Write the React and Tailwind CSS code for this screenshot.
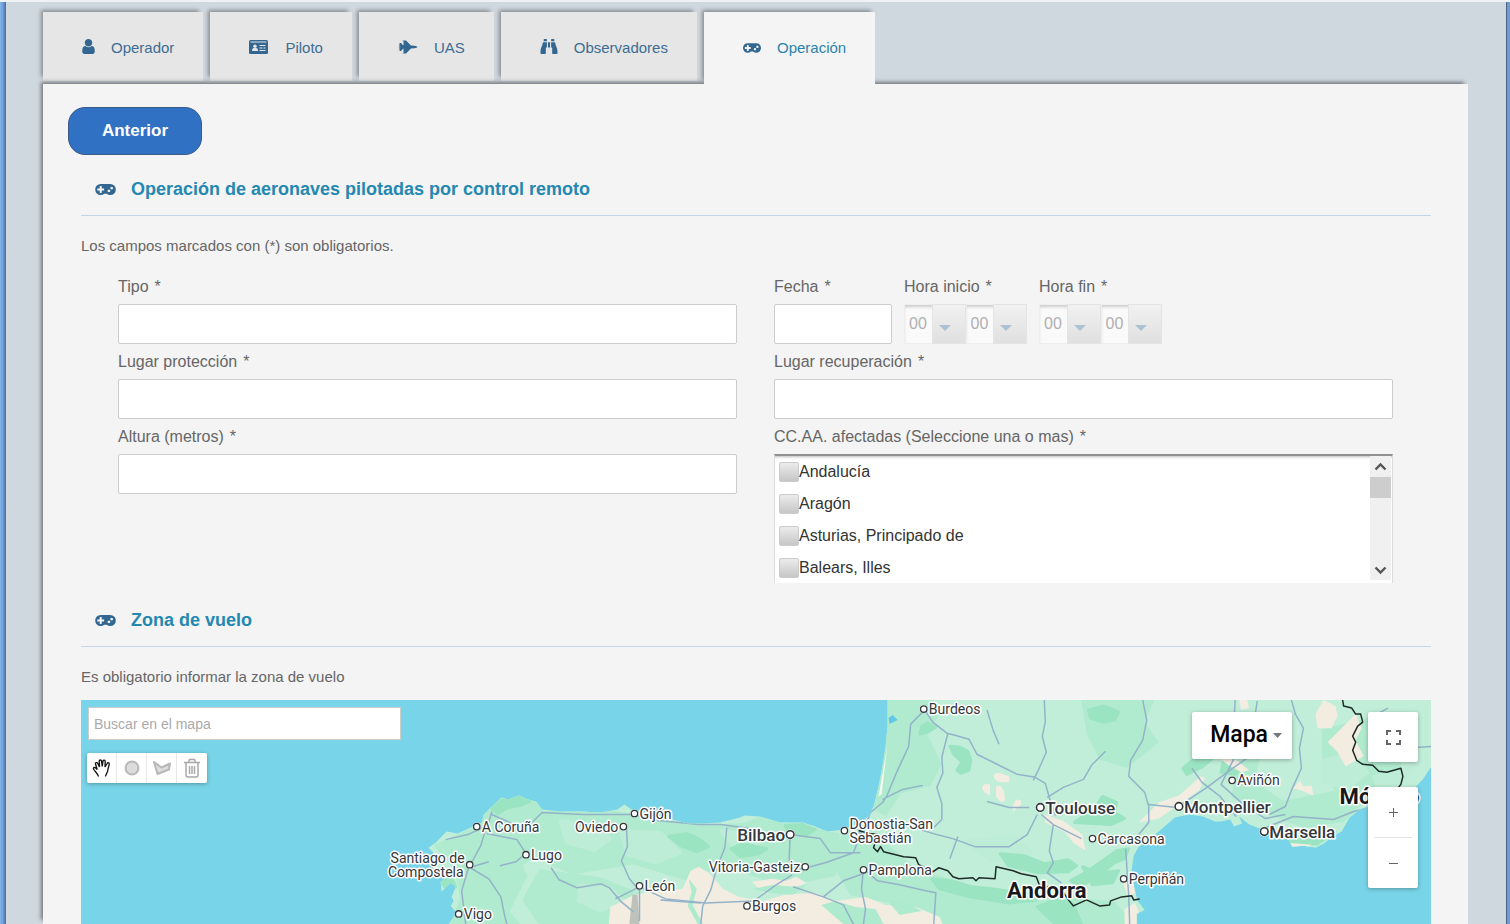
import { FaBinoculars } from "react-icons/fa";

const TABS = [
  { id: "operador", label: "Operador", icon: <UserIcon /> },
  { id: "piloto", label: "Piloto", icon: <IdCardIcon /> },
  { id: "uas", label: "UAS", icon: <JetIcon /> },
  { id: "observadores", label: "Observadores", icon: <FaBinoculars className="w-[18px] h-[17px]" /> },
  { id: "operacion", label: "Operación", icon: <GamepadIcon className="w-[18px] h-[10px]" />, active: true },
];

const REGIONS = ["Andalucía", "Aragón", "Asturias, Principado de", "Balears, Illes"];

export default function App() {
  return (
    <div className="flex min-h-screen border-t-2 border-[#eef1f5] bg-[#d0d8df] font-['Liberation_Sans',Arial,sans-serif] text-[#666]">
      <div className="w-[6px] shrink-0 bg-linear-to-r from-[#86b4e8] via-[#6b9edb] to-[#4a6b94]" />
      <main className="flex flex-1 flex-col pl-[37px] pr-[38px] pt-[10px]">
        <nav className="flex items-start gap-[7px] h-[72px]">
          {TABS.map(t => <Tab key={t.id} {...t} />)}
        </nav>

        <div className="flex flex-1 flex-col bg-[#f4f4f4] pt-[23px] shadow-[-3px_-3px_4px_-1px_rgba(0,0,0,0.45)]">
          <button className="ml-[25px] h-12 w-[134px] rounded-[17px] border border-[#3b5a85] bg-[#3171c4] text-[17px] font-bold text-white">
            Anterior
          </button>

          <section className="mt-2 pl-[38px] pr-[37px]">
            <Heading>Operación de aeronaves pilotadas por control remoto</Heading>
            <p className="mt-5 text-[15px] leading-5">Los campos marcados con (*) son obligatorios.</p>
            <OperationForm />
          </section>

          <section className="mt-[11px] flex flex-1 flex-col pl-[38px] pr-[37px]">
            <Heading>Zona de vuelo</Heading>
            <p className="mt-5 text-[15px] leading-5">Es obligatorio informar la zona de vuelo</p>
            <FlightMap />
          </section>
        </div>
      </main>
      <div className="w-1 shrink-0 border-l border-[#46648c] bg-[#6f9bcb]" />
    </div>
  );
}

function Tab({ label, icon, active }) {
  return (
    <button
      className={`flex items-center gap-4 pl-[39px] pr-[29px] text-[15px] shadow-[-3px_-3px_4px_-1px_rgba(0,0,0,0.35)]
        ${active ? "relative z-10 h-[72px] bg-[#f4f4f4] text-[#2b83ab]" : "h-[69px] bg-[#e6e6e6] text-[#3d6d93]"}`}
    >
      <span className="text-[#336791]">{icon}</span>
      <span className={active ? "" : "pt-[3px]"}>{label}</span>
    </button>
  );
}

function Heading({ children }) {
  return (
    <h2 className="flex h-[53px] items-center gap-[15px] border-b border-[#c3d4e4] pl-[14px] text-[18px] font-bold text-[#2488b0]">
      <GamepadIcon className="h-[11px] w-[21px] text-[#336791]" />
      {children}
    </h2>
  );
}

/* form */

function OperationForm() {
  return (
    <form className="mt-[13px] grid grid-cols-2 gap-x-[37px] pl-[37px] pr-[38px]">
      <Field id="tipo" label="Tipo" />
      <div className="flex gap-3">
        <div className="w-[118px]">
          <Field id="fecha" label="Fecha" />
        </div>
        <TimeField id="inicio" label="Hora inicio" />
        <TimeField id="fin" label="Hora fin" />
      </div>
      <Field id="proteccion" label="Lugar protección" />
      <Field id="recuperacion" label="Lugar recuperación" />
      <Field id="altura" label="Altura (metros)" />
      <div>
        <Label>CC.AA. afectadas (Seleccione una o mas)</Label>
        <RegionList />
      </div>
    </form>
  );
}

function Label({ htmlFor, children }) {
  return (
    <label htmlFor={htmlFor} className="flex h-[35px] items-center gap-[6px] whitespace-nowrap text-[16px]">
      <span>{children}</span>
      <span>*</span>
    </label>
  );
}

function Field({ id, label }) {
  return (
    <div>
      <Label htmlFor={id}>{label}</Label>
      <input id={id} type="text" className="block h-10 w-full rounded-[2px] border border-[#ccc] bg-white px-2 text-[16px]" />
    </div>
  );
}

function TimeField({ id, label }) {
  return (
    <div className="w-[123px]">
      <Label htmlFor={id}>{label}</Label>
      <div className="flex">
        <TimeSelect id={id} name="Hora" />
        <TimeSelect id={`${id}-min`} name="Minutos" />
      </div>
    </div>
  );
}

function TimeSelect({ id, name }) {
  return (
    <div className="relative flex-1">
      <select
        id={id}
        aria-label={name}
        disabled
        className="block h-10 w-full appearance-none border border-[#eee] bg-[#fafafa] pl-1 text-[16px] text-[#b0b0b0] opacity-100 shadow-[inset_0_3px_3px_-1px_#ccc]"
      >
        <option>00</option>
      </select>
      <span className="pointer-events-none absolute inset-y-0 right-0 flex w-[34px] items-center justify-start border border-[#e4e4e4] bg-linear-to-b from-[#f1f1f1] to-[#e0e0e0] pl-[6px] pt-[7px]">
        <svg className="h-[6px] w-3 text-[#abc3d0]" viewBox="0 0 12 6" fill="currentColor"><path d="M0 0h12L6 6z" /></svg>
      </span>
    </div>
  );
}

function RegionList() {
  return (
    <div className="flex h-[129px] border-x border-t-2 border-x-[#ddd] border-t-[#8f9290] bg-white shadow-[inset_0_3px_3px_-2px_#bbb]">
      <ul className="flex-1 pl-1 text-[16px] text-[#333]">
        {REGIONS.map(r => (
          <li key={r} className="h-8">
            <label className="flex h-8 items-center">
              <input
                type="checkbox"
                className="h-5 w-5 appearance-none rounded-[2px] border border-[#ccc] bg-linear-to-b from-[#ececec] to-[#c6c6c6]"
              />
              {r}
            </label>
          </li>
        ))}
      </ul>
      <div className="mb-[3px] mr-px flex w-[21px] flex-col bg-[#f0f0f0]">
        <Arrow d="M1.5 7.5 6.5 2.5l5 5" />
        <div className="h-[21px] bg-[#cdcdcd]" />
        <div className="flex-1" />
        <Arrow d="M1.5 2.5l5 5 5-5" />
      </div>
    </div>
  );
}

function Arrow({ d }) {
  return (
    <span className="flex h-[21px] items-center justify-center text-[#555]">
      <svg className="h-[10px] w-[13px]" viewBox="0 0 13 10" fill="none" stroke="currentColor" strokeWidth="2.4"><path d={d} /></svg>
    </span>
  );
}

/* map */

const LAND =
  "M369 223L377 212 371 205 374 200 372 196 376 186 371 182 362 191 361 181 369 176 358 172 352 166 360 161 351 158 354 152 349 147 356 142 367 131 378 133 389 128 402 122 404 114 412 106 422 97 428 99 439 95 448 99 456 101 462 109 480 111 502 111 520 112 537 109 544 104 551 109 569 114 592 119 607 123 622 123 639 122 659 117 664 115 679 116 699 122 722 122 734 126 746 131 762 129 779 122 788 115 792 106 797 86 801 66 804 46 806 26 806 0H1350V62L1339 79 1326 92 1300 98 1286 106 1276 109 1266 117 1258 131 1249 136 1240 143 1232 147 1220 145 1209 146 1205 139 1196 136 1188 132 1179 129 1166 124 1156 116 1159 123 1151 126 1147 119 1138 121 1132 121 1120 116 1106 114 1092 117 1076 131 1066 139 1056 146 1051 155 1049 169 1052 189 1055 200 1062 209 1054 213V223Z";

const FOREST = [
  "M404 114l18-17 17-2 17 6 6 8-22 20-28 14-20-12z",
  "M462 112l75 0 30 6 52 8 44-2 16-6 40 8 38 8-4 40-50 10-60-20-38 14-52-16-60 10-40-16-18 12-24-22z",
  "M356 145l46-20 30 20 14 30-18 36 10 12h-66l10-26-6-30z",
  "M806 0h44l8 10-14 24 14 30-10 20-30 8-14 22-10-6 10-60z",
  "M1000 0h70l-10 22 14 20-30 24-26-8-12-24z",
  "M1160 20l20 12-10 50 30 20 50-10 30 8-20 20-40 6-40-16-30-14z",
  "M1240 30l60-14 20 30-10 40-50 14-20-30z",
  "M762 134l40 8 30 26 60 20 40 4 100 10 16 21H850l-30-20-50-10-18-30z",
  "M460 170l60 8 40 16-20 29h-80l-16-24z",
];

const DEEP = [
  "M868 46l10 1 8 4 3 9-2 10-8 3-4-3 5-8-8-8z",
  "M838 34l2-8 6-3 8 4-8 5z",
  "M918 153l24 2 20 8 24-4 8 6-8 6-30 1-30-7z",
  "M992 122l20-14 8-12 14 6-2 10 10 6-14 6z",
  "M1100 68l14-12 14-8 4 8-12 10-16 8z",
  "M1020 160l14-10 12-2-4 10-10 4-18 14-16 10-10-6 18-10z",
  "M650 148l12-5 10 2 14 3-8 5-18 3z",
  "M704 125l18-1 12 5-10 6-16-2z",
  "M412 108l10-8 16-4 12 5-10 4-12 2-10 6z",
  "M362 182l10-6 4 10-8 4z",
  "M850 178l20 2 20 6 20 2 34 5 10 6-26 3-40-6-30-8z",
  "M1140 62l10-2 10 6-8 8-14-2z",
  "M1204 136l26 2 22-7-18 12-24 1z",
  "M1006 10l16-4 14 6-4 8-12 2-12-4z",
  "M588 136l18-3 12 5 10 8-12 5-14-5z",
  "M955 206l20-8 16 6 8 19h-26z",
  "M1000 166l16 6 20-2-6 12-20 2z",
  "M1180 24l14-6 8 16-8 16-10-6z",
];

const MEADOW = [
  "M480 120l30 4 20 14-16 12-28-8z",
  "M540 130l40 2 20 20-24 10-30-8z",
  "M500 184l30 4 14 12-24 10-22-10z",
  "M640 130l30 4 10 14-26 2z",
  "M880 140l50-4 20 16-40 8z",
  "M1240 60l30-8 14 20-20 16-24-6z",
  "M1290 76l40-10-14 18-22 8z",
];

const DRY = [
  "M530 206l24-12 12-2 36-4 8-18 8-4 10 6 14 16 16 8 24 4 22-6 30-2 20 8 30-4 20 8 30 2 24 10 6 17H540l-12-6z",
  "M671 181l20-3 14 2 10-4 10 6-16 8-26 3z",
  "M820 220l14-10 20 6 6 7z",
  "M911 75q4-4 10-1l6 2 0 6-6 0q-8 0-10-7z",
  "M900 86q4-4 8-2l0 11q-8-3-8-9z",
  "M914 86l4-1 4 6 1 9-4 2-5-6z",
  "M930 106l4-7 5 1 0 4-8 7z",
  "M962 114l18 6 20 14 3 16-12-8-8-10-20-10z",
  "M1056 122l20-20 20-7 22-19 4 2-6 12-20 14-20 14z",
  "M1232 14l8-14 12 6 2 10-6 12-14 0z",
  "M1244 42l28-28 6 14-6 12 8 16-18 10-8-14z",
  "M1210 88l6-8 4 6 8-1 2 10-12-5z",
  "M1134 56l20 4 12 10-8 2-14-8z",
  "M1156 0h8l2 8-8 2z",
  "M1040 180l10-2 3 14-8 4z",
  "M1042 208l10-6 4 8-2 13h-12z",
  "M1204 142l24 2-6 5-14 0z",
];

const ROADS = [
  "M366 139l22-5 20-9 4-14M412 114l18 8 10 8M407 125l-6 20-12 22 20-6M389 166l20 12 12 18 4 20 2 7M389 166l-7 24 4 33M407 133l30 6 9 14-10 8-16 4",
  "M430 132l18-6 14-14 40 2 50 0 26 6 40 4 22 0 28 4M471 167l8 12 18 8 24-4 8 4 12 14 12 10M546 126l1 20-6 14 8 18 10 12 0 30M559 186l26 12 40 4 48-2 22-16 16-10M559 186l-24 12",
  "M646 127l-2 20-8 20-6 22-8 16-2 18M580 199l40 3M709 134l-1 26 6 10 30-8 28-10 10-26M709 134l30 4 10 14 30 0M782 168l-2 20 4 20-2 15M712 186l30 10 20-16 22-8M742 196l20 8 10 19",
  "M782 168l14 12 22 4 26 6 10 2-2 31",
  "M843 10l8 12 14 11 8 2 14 4 8 15 20 10 20 10 18 3 10 6 4 14 6 18M866 33l-6 24 1 16-6 14 5 16 0 16-8 8M843 10l-14 14-2 22-12 26-10 24-4 6-12 10-4 10-10 14M801 99l20-10 20-4M905 10l6 20 6 14M962 0l1 22-3 14 4 16-8 18-5 10",
  "M905 101l22 6 20 0M965 97l16-10 20-8 8-14 14-14M955 114l-10 20-18 12-34 0-22-8-16-4-20-6M876 136l-8 22M959 114l12 10 28 14M971 124l-4 26 4 12-6 10 14 10",
  "M1060 0l4 20-4 20-12 20-2 16 16 16 4 14 0 16-10 12-12 6-22-2M1066 104l28 3 30-20 24-18 20-14 0-14 6-40M1043 148l3 46 1 29",
  "M1152 0l-1 20-1 40-12 24 20 18 24 16 20-4M1208 0l4 14 8 14-4 20 2 20-10 22-6 16-16 8M1180 128l30-12 40 3 20-8 16-4M1109 68l10 14 18 14 16 20M1290 16l14-8M1320 48l30-2",
];

const BORDERS = [
  "M777 130L788 133 796 134 793 144 792 147 796 151 799 146 802 151 810 153 822 156 834 157 837 164 851 171 857 167 866 170 871 176 877 178 891 177 894 180 897 177 913 178 914 166 931 170 939 173 954 176 957 184 980 190 986 199 991 205 1004 199 1017 205 1027 204 1028 200 1039 196 1049 195 1051 199 1057 198",
  "M1259 0l1 6 8 2 4 6 5 0 2 8-5 4-5 10 3 6-3 8 4 10 6 4 10 1 6 6 8 1 14-4 2 8-2 8-8 10",
];

const CITIES = [
  { name: "Burdeos", x: 842, y: 9 },
  { name: "Gijón", x: 554, y: 113 },
  { name: "A Coruña", x: 397, y: 126 },
  { name: "Oviedo", x: 543, y: 126, left: true },
  { name: "Lugo", x: 446, y: 154 },
  { name: "León", x: 559, y: 185 },
  { name: "Vigo", x: 379, y: 213 },
  { name: "Burgos", x: 666, y: 205 },
  { name: "Vitoria-Gasteiz", x: 724, y: 166, left: true },
  { name: "Pamplona", x: 782, y: 169 },
  { name: "Aviñón", x: 1149, y: 80 },
  { name: "Carcasona", x: 1010, y: 138 },
  { name: "Perpiñán", x: 1041, y: 178 },
  { name: "Bilbao", x: 709, y: 134, left: true, big: true },
  { name: "Toulouse", x: 958, y: 107, big: true },
  { name: "Montpellier", x: 1096, y: 106, big: true },
  { name: "Marsella", x: 1181, y: 131, big: true },
];

function FlightMap() {
  return (
    <div className="relative mt-[13px] min-h-[223px] flex-1 overflow-hidden bg-[#78d4e8]">
      <svg className="absolute inset-0 h-full w-full" viewBox="0 0 1350 223" preserveAspectRatio="xMidYMin slice">
        <clipPath id="land"><path d={LAND} /></clipPath>
        <path d={LAND} fill="#c1eed9" />
        <g clipPath="url(#land)" strokeLinejoin="round" strokeWidth="3">
          {FOREST.map(d => <path key={d} d={d} fill="#b0eacf" stroke="#b0eacf" />)}
          {MEADOW.map(d => <path key={d} d={d} fill="#bdedd6" stroke="#bdedd6" />)}
          {DEEP.map(d => <path key={d} d={d} fill="#9be4c1" stroke="#9be4c1" />)}
          {DRY.map(d => <path key={d} d={d} fill="#f3ece1" />)}
          <path d="M552 194h5l2 29h-10z" fill="#bfc2bb" />
          <path d="M608 178l8 10-4 16 10 19h-5l-10-18 4-14z" fill="#aeeacd" />
          <path d="M672 188l20-4 20 2 14-2-14 10-26-2zM740 204l14-4 20 6 20 2 8 15h-40zM806 200l20 2 14 8-22 4z" fill="#aeeacd" />
          <path d="M806 44l-9 52 3-2 5-42z" fill="#f6f8f2" />
          <path d="M807 18l4-3 5 5-8 4z" fill="#63c6e4" />
          {ROADS.map(d => <path key={d} d={d} fill="none" stroke="#93b3c9" strokeWidth="1.5" />)}
        </g>
        {BORDERS.map(d => <path key={d} d={d} fill="none" stroke="#1f2b27" strokeWidth="1.5" strokeLinejoin="round" />)}

        <g className="font-[Roboto,sans-serif]" fill="#33373b" stroke="#fff" strokeWidth="3" strokeLinejoin="round" paintOrder="stroke">
          {CITIES.map(c => <City key={c.name} {...c} />)}
          <City x={390} y={164} />
          <text x="385" y="162" fontSize="14" textAnchor="end">Santiago de</text>
          <text x="384" y="176" fontSize="14" textAnchor="end">Compostela</text>
          <City x={763} y={130} />
          <text x="768" y="128" fontSize="14">Donostia-San</text>
          <text x="768" y="142" fontSize="14">Sebastián</text>
          <text x="925" y="197" fontSize="22" fontWeight="700" fill="#16191b">Andorra</text>
          <text x="1256" y="104" fontSize="22" fontWeight="700" fill="#16191b">Mónaco</text>
        </g>
      </svg>

      <input
        type="text"
        aria-label="Buscar en el mapa"
        placeholder="Buscar en el mapa"
        className="absolute left-[7px] top-[7px] h-[33px] w-[313px] border border-[#ccc] bg-white px-[5px] text-[14px] placeholder:text-[#aaa]"
      />
      <DrawTools />

      <button className="absolute right-[139px] top-3 flex h-[47px] items-center gap-[5px] rounded-[2px] bg-white pl-[18px] pr-[10px] font-[Roboto,sans-serif] text-[23px] font-medium text-black shadow-[0_1px_4px_rgba(0,0,0,0.3)]">
        Mapa
        <svg className="h-[5px] w-[9px] text-[#777]" viewBox="0 0 9 5" fill="currentColor"><path d="M0 0h9L4.5 5z" /></svg>
      </button>
      <button
        aria-label="Pantalla completa"
        className="absolute right-[13px] top-3 flex h-[50px] w-[50px] items-center justify-center rounded-[2px] bg-white text-[#666] shadow-[0_1px_4px_rgba(0,0,0,0.3)]"
      >
        <svg className="h-[15px] w-[15px]" viewBox="0 0 15 15" fill="none" stroke="currentColor" strokeWidth="2">
          <path d="M1 5V1h4M10 1h4v4M14 10v4h-4M5 14H1v-4" />
        </svg>
      </button>
      <div className="absolute right-[13px] top-[87px] flex w-[50px] flex-col items-center rounded-[2px] bg-white text-[#666] shadow-[0_1px_4px_rgba(0,0,0,0.3)]">
        <ZoomButton label="Acercar" d="M0 4.5h9M4.5 0v9" />
        <div className="h-px w-[38px] bg-[#e3e3e3]" />
        <ZoomButton label="Alejar" d="M0 4.5h9" />
      </div>
    </div>
  );
}

function City({ name, x, y, left, big }) {
  return (
    <>
      {name && (
        <text
          x={left ? x - 5 : x + 5}
          y={big ? y + 6 : y + 5}
          fontSize={big ? 17 : 14}
          fontWeight={big ? 500 : 400}
          textAnchor={left ? "end" : "start"}
        >
          {name}
        </text>
      )}
      <circle cx={x} cy={y} r={big ? 5 : 4} fill="#fff" stroke="none" />
      <circle cx={x} cy={y} r={big ? 3.8 : 3.2} fill="#fff" stroke="#33373b" strokeWidth={big ? 1.6 : 1.3} paintOrder="normal" />
    </>
  );
}

function ZoomButton({ label, d }) {
  return (
    <button aria-label={label} className="flex h-[50px] w-full items-center justify-center">
      <svg className="h-[9px] w-[9px]" viewBox="0 0 9 9" stroke="currentColor" strokeWidth="1"><path d={d} /></svg>
    </button>
  );
}

function DrawTools() {
  return (
    <div className="absolute left-[6px] top-[53px] flex divide-x divide-[#e8e8e8] rounded-[2px] bg-white shadow-[0_1px_4px_rgba(0,0,0,0.3)]">
      <ToolButton label="Mover">
        <path d="M6.500 18.500C5.500 15.500 3.500 14 1.500 11c-.6-1.300 1-2 2.200-1l1.500 1.500L3.500 6c-.4-1.500 1.500-2 2.200-.7L7.500 9 7.200 3.200c0-1.500 2-1.600 2.300-.2l.7 5.500.8-5.500c.3-1.400 2.200-1.200 2.200.3L13 9l2-3.500c.7-1.300 2.600-.6 2.200.8L16 11c0 3.500-2 4.500-2.500 7.500" fill="#fff" stroke="#111" strokeWidth="1.3" />
      </ToolButton>
      <ToolButton label="Dibujar círculo">
        <circle cx="10" cy="10" r="6.5" fill="#dcdcdc" stroke="#b8b8b8" strokeWidth="2" />
      </ToolButton>
      <ToolButton label="Dibujar polígono">
        <path d="M2 4l7.500 5.500L18 5.500l-1 6L5.500 16z" fill="#dcdcdc" stroke="#b8b8b8" strokeWidth="2" strokeLinejoin="round" />
      </ToolButton>
      <ToolButton label="Borrar">
        <path d="M2 4.500h16M7 4V2.500q0-1 1-1h4q1 0 1 1V4M4 5v12q0 2 2 2h8q2 0 2-2V5M7.500 8v8M10 8v8M12.500 8v8" fill="none" stroke="#a8a8a8" strokeWidth="1.5" />
      </ToolButton>
    </div>
  );
}

function ToolButton({ label, children }) {
  return (
    <button aria-label={label} className="flex h-[30px] w-[30px] items-center justify-center">
      <svg className="h-5 w-5" viewBox="0 0 20 20">{children}</svg>
    </button>
  );
}

/* icons */

function UserIcon() {
  return (
    <svg className="h-[15px] w-[13px]" viewBox="256 128 1280 1536" fill="currentColor">
      <path d="M1536 1399q0 109-62.500 187t-150.500 78h-854q-88 0-150.500-78t-62.500-187q0-85 8.500-160.500t31.500-152 58.500-131 94-89 134.500-34.500q131 128 313 128t313-128q76 0 134.500 34.500t94 89 58.500 131 31.500 152 8.500 160.500zm-256-887q0 159-112.500 271.500t-271.500 112.500-271.500-112.500-112.500-271.500 112.500-271.500 271.500-112.500 271.500 112.500 112.500 271.500z" />
    </svg>
  );
}

function IdCardIcon() {
  return (
    <svg className="h-[14px] w-5" viewBox="0 0 20 14">
      <rect x="0" y="0" width="19" height="14" rx="1.5" fill="currentColor" />
      <path d="M1.500 2h16" stroke="#e6e6e6" strokeWidth="1" />
      <circle cx="6" cy="6.3" r="1.700" fill="#e6e6e6" />
      <path d="M3 11q0-3 2-3h2q2 0 2 3z" fill="#e6e6e6" />
      <path d="M10.500 5.500h6M10.500 8h3M14.500 8h2M10.500 10.500h6" stroke="#e6e6e6" strokeWidth="1.200" />
    </svg>
  );
}

function JetIcon() {
  return (
    <svg className="h-[14px] w-5" viewBox="0 0 20 14" fill="currentColor">
      <path d="M1.500 3h1.500l2 2.300h.5V1h-.8V.4h3.300L13 5.400l3.500.4q2.500.5 3 1.200-.5.700-3 1.200l-3.500.4-5 5H4.700V13h.8V8.700H5L3 11H1.500V8.200H.8V7.500l1.500-.3v-.4L.8 6.500v-.7h.7z" />
    </svg>
  );
}

function GamepadIcon({ className }) {
  return (
    <svg className={className} viewBox="0 512 1920 1024" fill="currentColor">
      <path d="M832 1088v-128q0-14-9-23t-23-9h-192v-192q0-14-9-23t-23-9h-128q-14 0-23 9t-9 23v192h-192q-14 0-23 9t-9 23v128q0 14 9 23t23 9h192v192q0 14 9 23t23 9h128q14 0 23-9t9-23v-192h192q14 0 23-9t9-23zm576 64q0-53-37.500-90.500t-90.500-37.500-90.500 37.500-37.500 90.500 37.500 90.500 90.500 37.500 90.500-37.500 37.500-90.500zm256-256q0-53-37.500-90.500t-90.500-37.500-90.500 37.500-37.500 90.500 37.500 90.500 90.500 37.500 90.500-37.500 37.500-90.500zm256 128q0 212-150 362t-362 150q-192 0-338-128h-220q-146 128-338 128-212 0-362-150t-150-362 150-362 362-150h896q212 0 362 150t150 362z" />
    </svg>
  );
}
